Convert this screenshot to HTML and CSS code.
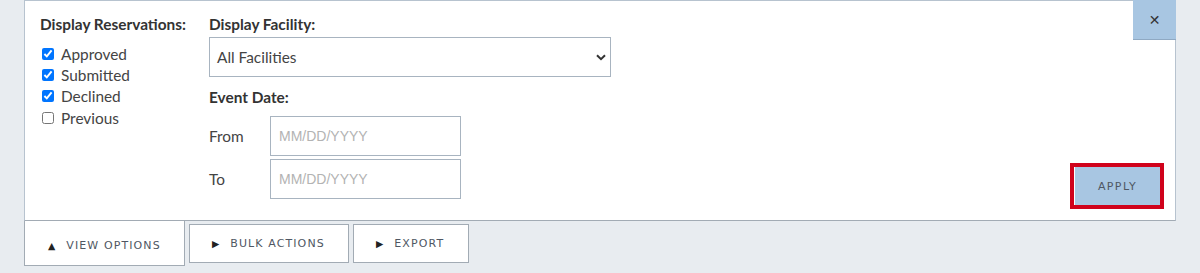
FILE: index.html
```html
<!DOCTYPE html>
<html>
<head>
<meta charset="utf-8">
<link rel="stylesheet" href="styles.css">
</head>
<body>
<div class="panel">
  <div class="col-res">
    <div class="heading">Display Reservations:</div>
    <label class="chk"><input type="checkbox" checked> Approved</label>
    <label class="chk"><input type="checkbox" checked> Submitted</label>
    <label class="chk"><input type="checkbox" checked> Declined</label>
    <label class="chk"><input type="checkbox"> Previous</label>
  </div>
  <div class="col-fac">
    <div class="heading">Display Facility:</div>
    <div class="select">
      <span>All Facilities</span>
      <svg width="10" height="7" viewBox="0 0 10 7"><path d="M1 1.2 L5 5.2 L9 1.2" fill="none" stroke="#333" stroke-width="2"/></svg>
    </div>
    <div class="heading date-h">Event Date:</div>
    <div class="date-row"><span class="dl">From</span><div class="inp">MM/DD/YYYY</div></div>
    <div class="date-row"><span class="dl">To</span><div class="inp">MM/DD/YYYY</div></div>
  </div>
  <div class="apply-wrap"><button class="apply">APPLY</button></div>
  <button class="close">&#x2715;</button>
</div>
<div class="tabs">
  <div class="tab active"><span class="tri">&#9650;</span>VIEW OPTIONS</div>
  <div class="tab bulk"><span class="tri">&#9654;</span>BULK ACTIONS</div>
  <div class="tab export"><span class="tri">&#9654;</span>EXPORT</div>
</div>
</body>
</html>
```
FILE: styles.css
```css
html, body {
  margin: 0;
  padding: 0;
}
body {
  background: #e8ecf0;
  font-family: Lato, "Open Sans", sans-serif;
  color: #333;
  width: 1200px;
  height: 273px;
  overflow: hidden;
}
.panel {
  position: relative;
  margin-left: 24px;
  width: 1152px;
  height: 221px;
  box-sizing: border-box;
  border: 1px solid #b7c3cf;
  border-bottom-color: #a2abb4;
  background: #fff;
  display: flex;
}
.col-res {
  padding: 14px 0 0 15px;
  width: 169px;
}
.col-res .heading {
  margin-bottom: 10px;
}
.heading {
  font-weight: 700;
  font-size: 15.4px;
  color: #333;
  line-height: 18px;
}
.chk {
  display: flex;
  align-items: center;
  height: 21.4px;
  font-size: 15.4px;
  color: #444;
}
.chk input {
  margin: 0 7px 0 2px;
  width: 12px;
  height: 12px;
}
.col-fac {
  padding-top: 14px;
  width: 402px;
}
.col-fac .heading {
  margin-bottom: 4px;
}
.select {
  box-sizing: border-box;
  height: 40px;
  width: 402px;
  border: 1px solid #a8b4c0;
  display: flex;
  align-items: center;
  justify-content: space-between;
  padding: 0 4px 0 7px;
  font-size: 15.4px;
  color: #444;
}
.col-fac .date-h {
  margin-top: 11px;
  margin-bottom: 10px;
}
.date-row {
  display: flex;
  align-items: center;
  margin-bottom: 3px;
}
.dl {
  width: 61px;
  font-size: 15.4px;
  color: #444;
}
.inp {
  box-sizing: border-box;
  width: 191px;
  height: 40px;
  border: 1px solid #a8b4c0;
  display: flex;
  align-items: center;
  padding-left: 8px;
  font-family: "Liberation Sans", Arial, sans-serif;
  font-size: 14px;
  color: #b3b3b3;
}
.apply-wrap {
  margin-left: auto;
  align-self: flex-end;
  margin-right: 11px;
  margin-bottom: 11px;
  border: 4px solid #d0021b;
  display: flex;
}
.apply {
  width: 86px;
  height: 38px;
  border: none;
  border-left: 1px solid #fff;
  background: #a8c6e2;
  font-family: "DejaVu Sans", Verdana, sans-serif;
  font-size: 11px;
  letter-spacing: 1.4px;
  color: #4f5763;
  padding: 0;
}
.close {
  position: absolute;
  top: -1px;
  right: -1px;
  width: 43px;
  height: 40px;
  border: none;
  border-bottom: 1px solid #8fa9c3;
  background: #a8c6e2;
  font-size: 14px;
  color: #333;
  font-family: "DejaVu Sans", sans-serif;
  padding: 0;
}
.tabs {
  display: flex;
  margin-left: 24px;
  gap: 4px;
  align-items: flex-start;
}
.tab {
  box-sizing: border-box;
  display: flex;
  align-items: center;
  font-family: "DejaVu Sans", Verdana, sans-serif;
  font-size: 11px;
  letter-spacing: 1.1px;
  color: #4f5763;
  background: #fff;
  border: 1px solid #a2abb4;
}
.tri {
  font-size: 9.5px;
  letter-spacing: 0;
  margin-right: 11px;
  color: #222;
}
.tab.active {
  margin-top: -1px;
  width: 161px;
  height: 46px;
  border-top: none;
  padding: 6px 0 0 23px;
}
.tab.bulk {
  margin-top: 3px;
  width: 160px;
  height: 39px;
  padding-left: 22px;
}
.tab.export {
  margin-top: 3px;
  width: 116px;
  height: 39px;
  padding-left: 22px;
}
```
